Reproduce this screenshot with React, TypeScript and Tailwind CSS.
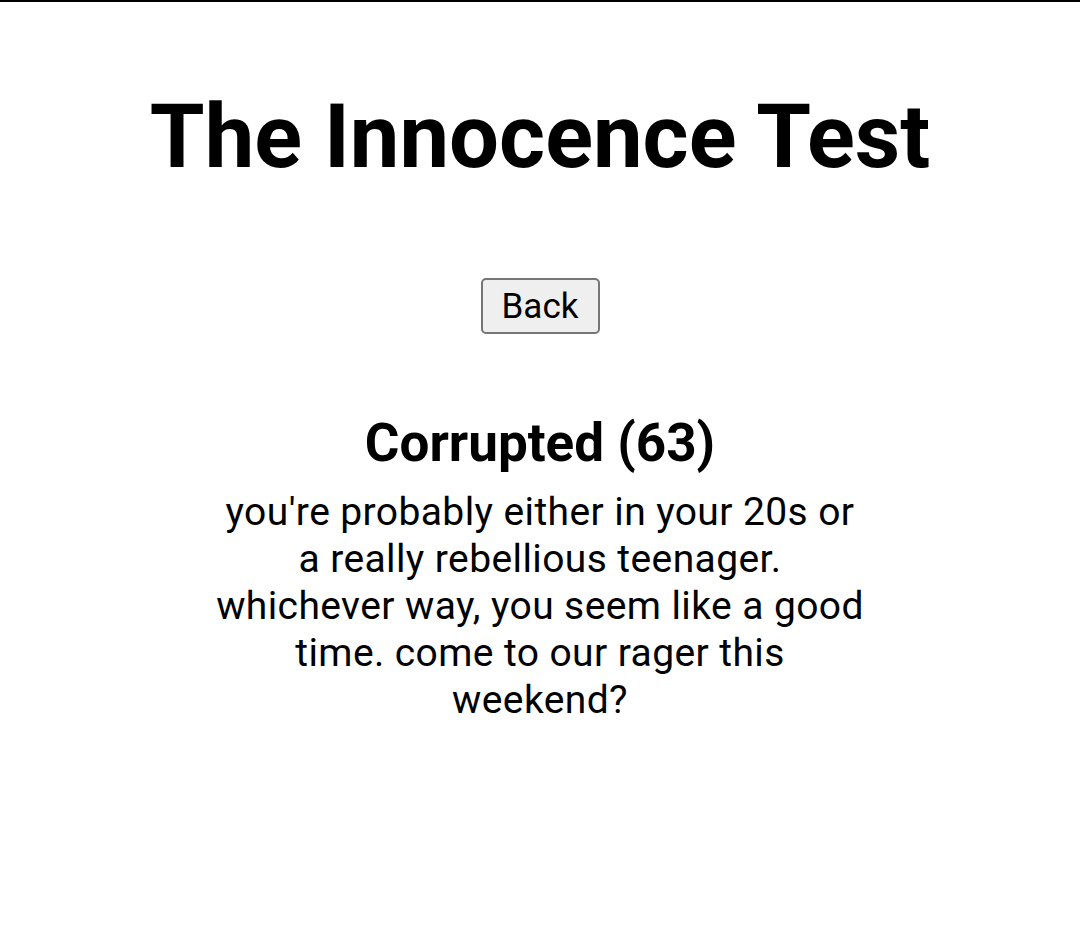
export default function App() {
  return (
    <main
      className="min-h-screen bg-white border-t-2 border-black text-black text-center"
      style={{ fontFamily: "Roboto, 'Liberation Sans', sans-serif" }}
    >
      <div className="flex flex-col items-center pt-[82px]">
        <h1 className="text-[88.5px] font-bold leading-[106px]">The Innocence Test</h1>

        <button className="mt-[88px] h-[56px] w-[119px] rounded-[5px] border-2 border-[#767676] bg-[#efefef] text-[35px] leading-none text-black">
          Back
        </button>

        <h2 className="mt-[77px] text-[53px] font-bold leading-[64px]">Corrupted (63)</h2>
        <p className="mt-[14px] w-[652px] text-[39px] tracking-[0.4px] leading-[47px]">
          you're probably either in your 20s or a really rebellious teenager. whichever way, you seem like a good time. come
          to our rager this weekend?
        </p>
      </div>
    </main>
  );
}
